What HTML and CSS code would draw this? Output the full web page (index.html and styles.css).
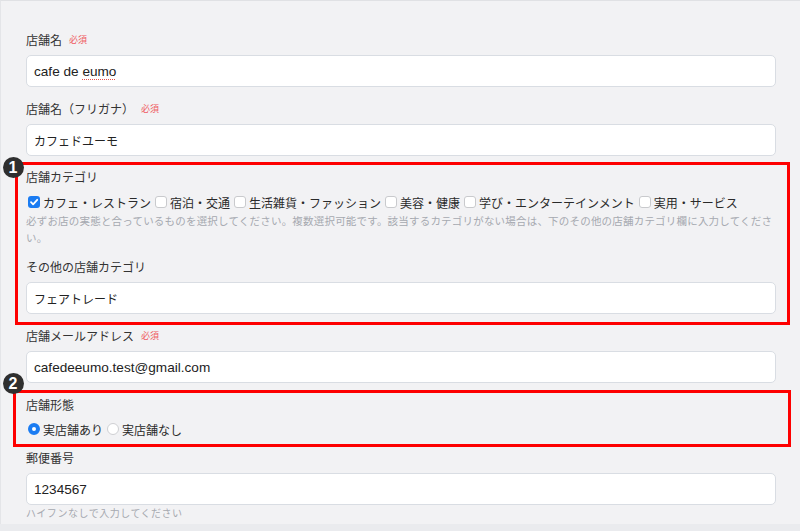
FILE: index.html
```html
<!DOCTYPE html>
<html lang="ja">
<head>
<meta charset="utf-8">
<title>店舗情報</title>
<link rel="stylesheet" href="styles.css">
</head>
<body>
<div class="page">
  <div class="field f1">
    <div class="label">店舗名<span class="req">必須</span></div>
    <div class="input latin">cafe de&nbsp;<span class="spell">eumo</span></div>
  </div>
  <div class="field f2">
    <div class="label">店舗名（フリガナ）<span class="req">必須</span></div>
    <div class="input">カフェドユーモ</div>
  </div>

  <div class="annot annot1">
    <span class="badge b1">1</span>
    <div class="label">店舗カテゴリ</div>
    <div class="checks">
      <span class="opt"><span class="cb on"><svg viewBox="0 0 12 12" width="12" height="12"><path d="M3 6.2 L5.1 8.3 L9.2 3.8" fill="none" stroke="#fff" stroke-width="1.8" stroke-linecap="round" stroke-linejoin="round"/></svg></span>カフェ・レストラン</span>
      <span class="opt"><span class="cb"></span>宿泊・交通</span>
      <span class="opt"><span class="cb"></span>生活雑貨・ファッション</span>
      <span class="opt"><span class="cb"></span>美容・健康</span>
      <span class="opt"><span class="cb"></span>学び・エンターテインメント</span>
      <span class="opt"><span class="cb"></span>実用・サービス</span>
    </div>
    <p class="help wide">必ずお店の実態と合っているものを選択してください。複数選択可能です。該当するカテゴリがない場合は、下のその他の店舗カテゴリ欄に入力してください。</p>
    <div class="label">その他の店舗カテゴリ</div>
    <div class="input">フェアトレード</div>
  </div>

  <div class="field f3">
    <div class="label">店舗メールアドレス<span class="req">必須</span></div>
    <div class="input latin">cafedeeumo.test@gmail.com</div>
  </div>

  <div class="annot annot2">
    <span class="badge b2">2</span>
    <div class="label">店舗形態</div>
    <div class="radios">
      <span class="opt"><span class="rd on"></span>実店舗あり</span>
      <span class="opt"><span class="rd"></span>実店舗なし</span>
    </div>
  </div>

  <div class="field f4">
    <div class="label">郵便番号</div>
    <div class="input latin">1234567</div>
    <p class="help narrow">ハイフンなしで入力してください</p>
  </div>
</div>
</body>
</html>
```

FILE: styles.css
```css
html, body {
  margin: 0;
  padding: 0;
  background: #eaebee;
}

.page {
  box-sizing: border-box;
  width: 800px;
  background: #f2f2f4;
  border-top: 1px solid #e0e1e4;
  border-left: 1px solid #e4e5e8;
  padding: 29px 24px 3px 25px;
  font-family: "Noto Sans CJK JP", "Noto Sans", sans-serif;
  color: #333;
}

.field {
  margin-bottom: 12px;
}

.f2 { margin-bottom: 6px; }
.f3 { margin-top: 1px; margin-bottom: 7px; }
.f4 { margin-top: 1px; margin-bottom: 0; }

.label {
  font-size: 12px;
  line-height: 20px;
  height: 20px;
  margin-bottom: 5px;
  color: #333;
  display: flex;
  align-items: center;
}

.req {
  font-size: 9px;
  color: #ef5a60;
  margin-left: 7px;
  line-height: 20px;
}

.input {
  box-sizing: border-box;
  height: 32px;
  background: #fff;
  border: 1px solid #d9dde3;
  border-radius: 5px;
  padding: 0 7px;
  display: flex;
  align-items: center;
  font-size: 12px;
  color: #222;
  white-space: pre;
}

.input.latin {
  font-family: "Liberation Sans", "Noto Sans CJK JP", sans-serif;
  font-size: 13.6px;
}

.spell {
  text-decoration-line: underline;
  text-decoration-style: dotted;
  text-decoration-color: #e4504c;
  text-decoration-thickness: 1px;
  text-underline-offset: 3px;
}

.annot {
  position: relative;
  border: 3px solid #fe0000;
}

.annot1 {
  margin: 0 -14px 0 -11px;
  padding: 2px 11px 8px 8px;
}

.annot2 {
  margin: 0 -15px 0 -13px;
  padding: 2px 12px 5px 10px;
}

.badge {
  position: absolute;
  z-index: 2;
  width: 21px;
  height: 21px;
  border-radius: 50%;
  background: #2f2f2f;
  color: #fff;
  font-family: "Liberation Sans", sans-serif;
  font-weight: bold;
  font-size: 16px;
  line-height: 21px;
  text-align: center;
}

.b1 { left: -15.5px; top: -8px; }
.b2 { left: -13.5px; top: -20.5px; }

.checks, .radios {
  display: flex;
  align-items: center;
  height: 20px;
  padding-left: 2px;
  gap: 4px;
  font-size: 12px;
  color: #2a2a2a;
}

.radios { margin-top: -1px; }

.opt {
  display: flex;
  align-items: center;
  gap: 3px;
  white-space: nowrap;
}

.cb {
  box-sizing: border-box;
  width: 12px;
  height: 12px;
  border: 1px solid #c9cacd;
  border-radius: 3px;
  background: #fff;
  display: flex;
}

.cb.on {
  border: none;
  background: #1b7cf2;
}

.rd {
  box-sizing: border-box;
  width: 12px;
  height: 12px;
  border-radius: 50%;
  border: 1px solid #cfd0d3;
  background: #fff;
}

.rd.on {
  border: 4px solid #1b7cf2;
  background: #fff;
}

.help {
  margin: 0;
  line-height: 16px;
  color: #a6a9b0;
}

.help.wide {
  font-size: 10.5px;
  letter-spacing: 0.2px;
  line-height: 17px;
  margin-bottom: 11px;
}

.help.narrow {
  font-size: 10px;
  letter-spacing: 0.5px;
}
```
